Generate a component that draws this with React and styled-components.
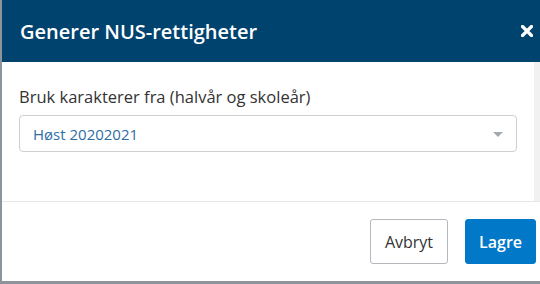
import React from "react";
import styled, { createGlobalStyle } from "styled-components";

const GlobalStyle = createGlobalStyle`
  html, body {
    margin: 0;
    padding: 0;
    background: #8d949b;
    overflow: hidden;
    font-family: "Open Sans", "Liberation Sans", sans-serif;
  }
  * {
    box-sizing: border-box;
  }
`;

const App = () => {
  return (
    <>
      <GlobalStyle />
      <Modal>
        <Header>
          <Title>Generer NUS-rettigheter</Title>
          <CloseButton aria-label="Lukk">
            <svg width="12" height="12" viewBox="0 0 12 12">
              <path
                d="M1.5 1.5 L10.5 10.5 M10.5 1.5 L1.5 10.5"
                stroke="#fff"
                strokeWidth="3.2"
                strokeLinecap="round"
              />
            </svg>
          </CloseButton>
        </Header>
        <Body>
          <Content>
            <Label>Bruk karakterer fra (halvår og skoleår)</Label>
            <Select>
              <SelectValue>Høst 20202021</SelectValue>
              <Caret />
            </Select>
          </Content>
          <ScrollTrack />
        </Body>
        <Footer>
          <Button>Avbryt</Button>
          <Button primary>Lagre</Button>
        </Footer>
      </Modal>
    </>
  );
};

export default App;

const Modal = styled.div`
  margin-left: 2px;
  width: 538px;
  height: 281px;
  background: #fff;
  display: flex;
  flex-direction: column;
`;

const Header = styled.header`
  height: 62px;
  flex: none;
  background: #00436f;
  display: flex;
  align-items: center;
  justify-content: space-between;
  padding: 0 6px 0 18px;
`;

const Title = styled.h1`
  margin: 0;
  color: #fff;
  font-size: 20px;
  font-weight: 600;
  line-height: 26px;
  margin-top: 1px;
`;

const CloseButton = styled.button`
  border: 0;
  background: none;
  padding: 0;
  width: 14px;
  height: 14px;
  display: flex;
  align-items: center;
  justify-content: center;
  cursor: pointer;
`;

const Body = styled.div`
  height: 139px;
  flex: none;
  display: flex;
`;

const Content = styled.div`
  flex: 1;
  padding: 25px 17px 0 17px;
`;

const ScrollTrack = styled.div`
  width: 6px;
  background: #f1f1f1;
`;

const Label = styled.label`
  display: block;
  font-size: 16.5px;
  line-height: 20px;
  color: #333;
  margin-bottom: 8px;
`;

const Select = styled.div`
  height: 37px;
  border: 1px solid #cfcfcf;
  border-radius: 4px;
  display: flex;
  align-items: center;
  justify-content: space-between;
  padding: 0 13px 0 13px;
`;

const SelectValue = styled.span`
  font-size: 15px;
  line-height: 20px;
  color: #2e6da4;
`;

const Caret = styled.span`
  width: 0;
  height: 0;
  border-left: 5.5px solid transparent;
  border-right: 5.5px solid transparent;
  border-top: 5px solid #a4a9ae;
  margin-top: 1px;
`;

const Footer = styled.footer`
  flex: 1;
  border-top: 1px solid #e6e6e6;
  display: flex;
  justify-content: flex-end;
  align-items: flex-start;
  gap: 17px;
  padding: 17px 4px 0 0;
`;

const Button = styled.button`
  height: 45px;
  padding: 0 ${(p) => (p.primary ? "13px" : "14px")};
  min-width: ${(p) => (p.primary ? "70px" : "78px")};
  border-radius: 3px;
  border: 1px solid ${(p) => (p.primary ? "#0178c8" : "#b4b8bc")};
  background: ${(p) => (p.primary ? "#0178c8" : "#fff")};
  color: ${(p) => (p.primary ? "#fff" : "#333")};
  font-family: "Open Sans", "Liberation Sans", sans-serif;
  font-size: 16px;
  font-weight: ${(p) => (p.primary ? 600 : 400)};
  cursor: pointer;
`;
